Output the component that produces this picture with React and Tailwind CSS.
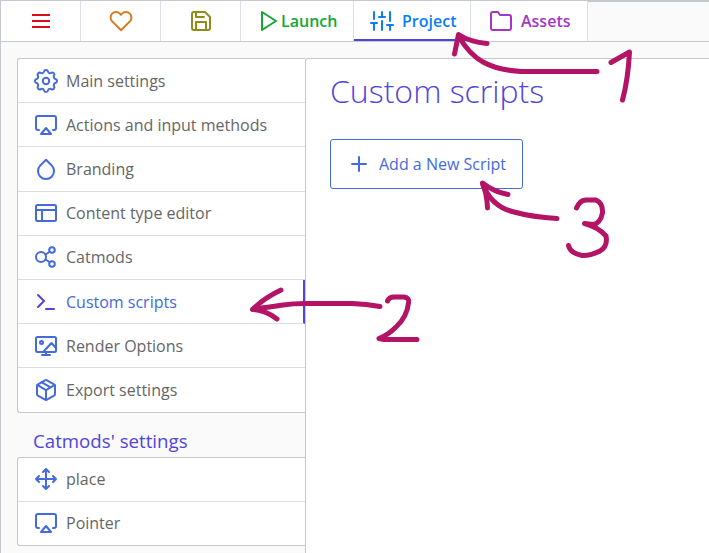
import React from 'react';

const Icon = ({ children, className = '', size = 24, width = 2 }) => (
  <svg
    width={size}
    height={size}
    viewBox="0 0 24 24"
    fill="none"
    stroke="currentColor"
    strokeWidth={width}
    strokeLinecap="round"
    strokeLinejoin="round"
    className={`shrink-0 ${className}`}
  >
    {children}
  </svg>
);

const icons = {
  gear: (
    <>
      <path
        transform="translate(-2.64 -2.64) scale(1.22)"
        strokeWidth="1.64"
        d="M10.325 4.317c.426-1.756 2.924-1.756 3.35 0a1.724 1.724 0 0 0 2.573 1.066c1.543-.94 3.31.826 2.37 2.37a1.724 1.724 0 0 0 1.065 2.572c1.756.426 1.756 2.924 0 3.35a1.724 1.724 0 0 0-1.066 2.573c.94 1.543-.826 3.31-2.37 2.37a1.724 1.724 0 0 0-2.572 1.065c-.426 1.756-2.924 1.756-3.35 0a1.724 1.724 0 0 0-2.573-1.066c-1.543.94-3.31-.826-2.37-2.37a1.724 1.724 0 0 0-1.065-2.572c-1.756-.426-1.756-2.924 0-3.35a1.724 1.724 0 0 0 1.066-2.573c-.94-1.543.826-3.31 2.37-2.37 1 .608 2.296.07 2.572-1.065z"
      />
      <circle cx="12" cy="12" r="3.2" />
    </>
  ),
  airplay: (
    <>
      <path d="M5 17H4a2 2 0 0 1-2-2V5a2 2 0 0 1 2-2h16a2 2 0 0 1 2 2v10a2 2 0 0 1-2 2h-1" />
      <path d="m12 15 5 6H7z" />
    </>
  ),
  droplet: <path d="m12 2.7 5.66 5.66a8 8 0 1 1-11.31 0z" />,
  layout: (
    <>
      <rect x="2" y="4" width="20" height="16" rx="1.5" />
      <path d="M2 9h20M8 9v11" />
    </>
  ),
  nodes: (
    <>
      <circle cx="7" cy="12" r="5" />
      <circle cx="18" cy="5" r="2.8" />
      <circle cx="18" cy="19" r="2.8" />
      <path d="m11.500 9.500 4-2.500M11.500 14.500l4 2.500" />
    </>
  ),
  terminal: <path d="m4 17 6-6-6-6M12 19h8" />,
  render: (
    <>
      <rect x="2" y="3" width="20" height="15" rx="1.500" />
      <circle cx="7.500" cy="8.500" r="1.500" />
      <path d="m10 17 7.500-8 4 4.500M12 18v3M8 21h8" />
    </>
  ),
  box: (
    <>
      <path d="M21 16V8a2 2 0 0 0-1-1.730l-7-4a2 2 0 0 0-2 0l-7 4A2 2 0 0 0 3 8v8a2 2 0 0 0 1 1.730l7 4a2 2 0 0 0 2 0l7-4A2 2 0 0 0 21 16z" />
      <path d="m3.270 6.960 8.730 5.050 8.730-5.050M12 22.080V12M7.500 4.210l9 5.190" />
    </>
  ),
  move: <path d="m5 9-3 3 3 3M9 5l3-3 3 3M15 19l-3 3-3-3M19 9l3 3-3 3M2 12h20M12 2v20" />,
  sliders: <path d="M4 21v-7M4 10V3M12 21v-9M12 8V3M20 21v-5M20 12V3M1 14h6M9 8h6M17 16h6" />,
};

const Tab = ({ className, children }) => (
  <div className={`flex h-full items-center border-r border-[#dcdfe3] bg-white ${className}`}>{children}</div>
);

const Item = ({ icon, label, active, className = 'h-11' }) => (
  <div
    className={`flex items-center gap-2 border-b border-[#dcdfe3] pl-4 last:border-b-0 ${className} ${
      active ? 'border-r-2 border-r-[#5144db] text-[#446adb]' : 'text-[#666]'
    }`}
  >
    <Icon className={active ? 'text-[#5144db]' : 'text-[#446adb]'}>{icons[icon]}</Icon>
    <span>{label}</span>
  </div>
);

const Annotations = () => (
  <svg
    className="pointer-events-none absolute -left-px -top-px"
    width="709"
    height="553"
    fill="none"
    stroke="#b31466"
    strokeWidth="5"
    strokeLinecap="round"
    strokeLinejoin="round"
  >
    <path d="M454.500 54 458.500 34.500Q470 42 487 43.500" />
    <path d="M459 37Q470 55 483 62 497 70 521 71.500H597" />
    <path d="M611 62.500 629.500 52Q628 80 622.500 100" />
    <path d="M281 290Q264 298 252.500 309.500 265 310 277 319" />
    <path d="M253 309Q270 307 283 305 293 303.500 305 303.500H352Q366 304 380 306.500" />
    <path d="M387.500 301Q389 297 394 297H404Q410 298 408.500 303 407 317 396 327 388 335 379 338.500L384 339.500H417" />
    <path d="M487.500 208Q487 194 482.500 183 494 192 508 194.500" />
    <path d="M483 185Q492 207 514 212 532 217 557 218.500" />
    <path d="M576.500 208Q580 200 586 200H596Q603 203 602.500 213 600 224 593 224.500L584.500 223.500Q598 227 606 236 608 246 600 251 590 256 582 255.500 570 253 568.500 245.500" />
  </svg>
);

export default function App() {
  return (
    <div className="relative flex h-[553px] w-[709px] flex-col overflow-hidden border-l border-t border-[#c5c9ce] bg-[#fafafa] font-['Open_Sans',sans-serif] text-base leading-6">
      <header className="flex h-[41px] shrink-0 border-b border-[#c5c9ce]">
        <Tab className="w-20 justify-center text-[#d90d18]">
          <Icon>
            <path d="M3 6h18M3 12h18M3 18h18" strokeLinecap="square" transform="translate(1.200 0) scale(.9 1)" />
          </Icon>
        </Tab>
        <Tab className="w-20 justify-center text-[#d67c1c]">
          <Icon>
            <path d="M20.840 4.610a5.500 5.500 0 0 0-7.780 0L12 5.670l-1.060-1.060a5.500 5.500 0 0 0-7.780 7.780L12 21.230l8.840-8.840a5.500 5.500 0 0 0 0-7.780z" />
          </Icon>
        </Tab>
        <Tab className="w-20 justify-center text-[#918b17]">
          <Icon>
            <path d="M19 21H5a2 2 0 0 1-2-2V5a2 2 0 0 1 2-2h11l5 5v11a2 2 0 0 1-2 2z" />
            <path d="M17 21v-8H7v8M7 3v5h8" />
          </Icon>
        </Tab>
        <Tab className="w-[113px] pl-4 font-semibold text-[#14a835]">
          <Icon>
            <path d="m5 3 14 9-14 9z" />
          </Icon>
          <span>Launch</span>
        </Tab>
        <Tab className="w-[117px] gap-2 border-b-2 border-b-[#5144db] pl-4 pt-0.5 font-semibold text-[#0c7cfa]">
          <Icon>{icons.sliders}</Icon>
          <span>Project</span>
        </Tab>
        <Tab className="w-[117px] gap-2 pl-[18px] font-semibold text-[#a335c7]">
          <Icon>
            <path d="M22 19a2 2 0 0 1-2 2H4a2 2 0 0 1-2-2V5a2 2 0 0 1 2-2h5l2 3h9a2 2 0 0 1 2 2z" />
          </Icon>
          <span>Assets</span>
        </Tab>
        <div className="flex-1 border-t border-[#c5c9ce]" />
      </header>

      <div className="flex min-h-0 flex-1 pt-4">
        <aside className="flex w-[304px] shrink-0 flex-col pl-4">
          <nav className="h-[355px] rounded-l-[3px] border border-r-0 border-[#c5c9ce] bg-white">
            <Item icon="gear" label="Main settings" />
            <Item icon="airplay" label="Actions and input methods" />
            <Item icon="droplet" label="Branding" className="h-[45px] pb-px" />
            <Item icon="layout" label="Content type editor" className="h-11 pb-0.5" />
            <Item icon="nodes" label="Catmods" className="h-11 pb-0.5" />
            <Item icon="terminal" label="Custom scripts" active />
            <Item icon="render" label="Render Options" />
            <Item icon="box" label="Export settings" />
          </nav>
          <h2 className="flex h-11 items-end pb-1 pl-4 text-[18.700px] text-[#5144db]">Catmods' settings</h2>
          <nav className="rounded-l-[3px] border border-r-0 border-[#c5c9ce] bg-white">
            <Item icon="move" label="place" className="h-11 pb-px" />
            <Item icon="airplay" label="Pointer" className="h-[43px] pb-px" />
          </nav>
        </aside>
        <main className="flex-1 rounded-tl-[3px] border-l border-t border-[#c5c9ce] bg-white pl-6 pt-3">
          <h1 className="-mt-px text-[32px] font-light leading-[42px] text-[#5144db]">Custom scripts</h1>
          <button className="mt-[27px] flex h-[50px] w-[193px] items-center gap-2 rounded-[3px] border border-[#446adb] pl-4 text-[#446adb]">
            <Icon>
              <path d="M12 5v14M5 12h14" />
            </Icon>
            <span>Add a New Script</span>
          </button>
        </main>
      </div>
      <Annotations />
    </div>
  );
}
